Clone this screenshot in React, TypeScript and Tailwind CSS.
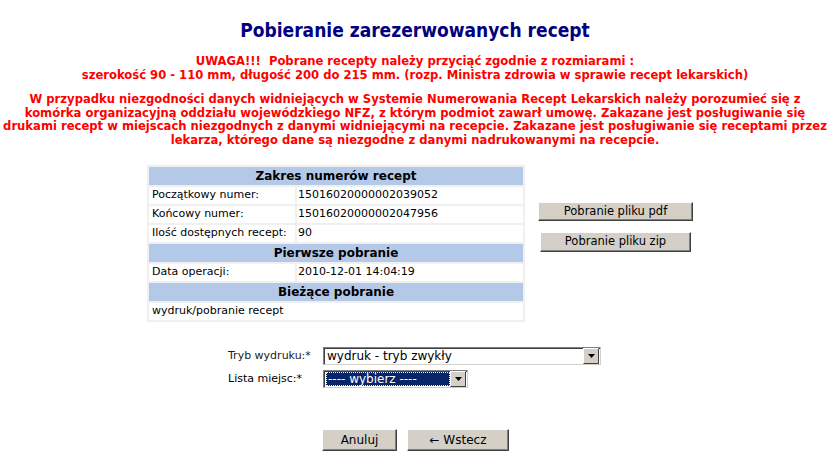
import React from "react";

const V = "font-['Verdana','DejaVu_Sans',sans-serif]";
const T = "font-['Tahoma','DejaVu_Sans_Condensed','DejaVu_Sans',sans-serif]";

function Btn({ children, className = "" }: { children: React.ReactNode; className?: string }) {
  return (
    <div
      className={`bg-[#d4d0c8] border border-t-white border-l-white border-r-[#404040] border-b-[#404040] shadow-[inset_-1px_-1px_0_#808080] flex items-center justify-center text-black ${V} ${className}`}
    >
      {children}
    </div>
  );
}

function Header({ children }: { children: React.ReactNode }) {
  return (
    <div className="col-span-2 h-[18px] bg-[#b4c9e8] flex items-center justify-center font-bold text-[12px] text-black">
      {children}
    </div>
  );
}

function Row({ label, value }: { label: string; value: string }) {
  return (
    <>
      <div className="h-[17px] bg-white flex items-center pl-[3px] whitespace-nowrap">{label}</div>
      <div className="h-[17px] bg-white flex items-center pl-[1px]">{value}</div>
    </>
  );
}

function Arrow() {
  return (
    <div className="w-[16px] h-[16px] bg-[#d4d0c8] border border-t-white border-l-white border-r-[#404040] border-b-[#404040] flex items-center justify-center">
      <svg width="7" height="4" viewBox="0 0 7 4">
        <path d="M0 0H7L3.5 4Z" fill="#000" />
      </svg>
    </div>
  );
}

export default function App() {
  return (
    <div className={`w-[830px] h-[467px] bg-white ${V} text-[11px] text-black overflow-hidden`}>
      <div className={`pt-[18px] text-center ${T} font-bold text-[19px] leading-[24px] text-[#000080]`}>
        Pobieranie zarezerwowanych recept
      </div>
      <div className={`mt-[12px] text-center ${T} font-bold text-[12.9px] leading-[14px] text-[#ff0000] whitespace-nowrap`}>
        <div>UWAGA!!!&nbsp; Pobrane recepty należy przyciąć zgodnie z rozmiarami :</div>
        <div>szerokość 90 - 110 mm, długość 200 do 215 mm. (rozp. Ministra zdrowia w sprawie recept lekarskich)</div>
        <div className="mt-[10px] leading-[13.5px]">
          W przypadku niezgodności danych widniejących w Systemie Numerowania Recept Lekarskich należy porozumieć się z
          <br />
          komórka organizacyjną oddziału wojewódzkiego NFZ, z którym podmiot zawarł umowę. Zakazane jest posługiwanie się
          <br />
          drukami recept w miejscach niezgodnych z danymi widniejącymi na recepcie. Zakazane jest posługiwanie się receptami przez
          <br />
          lekarza, którego dane są niezgodne z danymi nadrukowanymi na recepcie.
        </div>
      </div>

      <div className="flex mt-[19px] pl-[147px]">
        <div className="w-[378px] bg-[#f0f0f0] p-[2px] grid grid-cols-[146px_1fr] gap-[2px]">
          <Header>Zakres numerów recept</Header>
          <Row label="Początkowy numer:" value="15016020000002039052" />
          <Row label="Końcowy numer:" value="15016020000002047956" />
          <Row label="Ilość dostępnych recept:" value="90" />
          <Header>Pierwsze pobranie</Header>
          <Row label="Data operacji:" value="2010-12-01 14:04:19" />
          <Header>Bieżące pobranie</Header>
          <div className="col-span-2 h-[17px] bg-white flex items-center pl-[3px]">wydruk/pobranie recept</div>
        </div>
        <div className="ml-[13px] mt-[37px] flex flex-col items-start gap-[11px]">
          <Btn className="w-[155px] h-[19px] text-[11.5px]">Pobranie pliku pdf</Btn>
          <Btn className="ml-[2px] w-[151px] h-[20px] text-[11.5px]">Pobranie pliku zip</Btn>
        </div>
      </div>

      <div className="mt-[25px] pl-[228px] flex flex-col gap-[5px]">
        <div className="flex items-center h-[18px]">
          <div className="w-[95px] text-[#1a1a1a]">Tryb wydruku:*</div>
          <div className="w-[278px] h-[18px] bg-white border border-t-[#808080] border-l-[#808080] border-r-[#d4d0c8] border-b-[#d4d0c8] shadow-[inset_1px_1px_0_#404040] flex items-center justify-between pr-[1px]">
            <span className="pl-[3px] leading-none text-[12px]">wydruk - tryb zwykły</span>
            <Arrow />
          </div>
        </div>
        <div className="flex items-center h-[18px]">
          <div className="w-[95px]">Lista miejsc:*</div>
          <div className="w-[145px] h-[18px] bg-white border border-t-[#808080] border-l-[#808080] border-r-[#d4d0c8] border-b-[#d4d0c8] shadow-[inset_1px_1px_0_#404040] flex items-center justify-between pl-[2px] pr-[1px]">
            <span className="flex-1 h-[14px] bg-[#0a246a] text-white text-[12px] outline-1 outline-dotted outline-[#ffff99] -outline-offset-1 pl-[2px] leading-[14px]">
              ---- wybierz ----
            </span>
            <Arrow />
          </div>
        </div>
      </div>

      <div className="mt-[41px] pl-[322px] flex gap-[10px]">
        <Btn className="w-[75px] h-[22px] text-[12px]">Anuluj</Btn>
        <Btn className="w-[102px] h-[22px] text-[12px]">← Wstecz</Btn>
      </div>
    </div>
  );
}
